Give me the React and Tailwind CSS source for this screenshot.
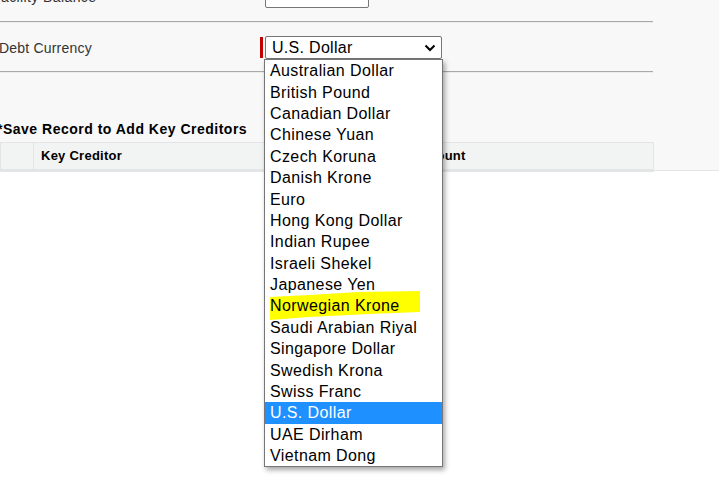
import React from "react";

const currencies = [
  "Australian Dollar",
  "British Pound",
  "Canadian Dollar",
  "Chinese Yuan",
  "Czech Koruna",
  "Danish Krone",
  "Euro",
  "Hong Kong Dollar",
  "Indian Rupee",
  "Israeli Shekel",
  "Japanese Yen",
  "Norwegian Krone",
  "Saudi Arabian Riyal",
  "Singapore Dollar",
  "Swedish Krona",
  "Swiss Franc",
  "U.S. Dollar",
  "UAE Dirham",
  "Vietnam Dong",
];

export default function App() {
  return (
    <div
      className="relative min-h-screen w-[719px] h-[486px] overflow-hidden bg-white"
      style={{ fontFamily: '"Liberation Sans", Arial, sans-serif' }}
    >
      <div className="h-[185px] bg-[#f8f8f8] border-b border-[#e5e5e5]">
        <div className="w-[653px]">
          {/* Facility Balance row (cut off) */}
          <div className="-mt-[14px] flex h-[22px] items-center">
            <div className="w-[265px] -ml-[8px] text-[14px] tracking-[0.4px] text-[#333]">
              Facility Balance
            </div>
            <div className="ml-[8px] h-[22px] w-[104px] rounded-[2px] border border-[#767676] bg-white" />
          </div>
          <div className="mt-[13px] h-[1px] bg-[#a9a9a9]" />
          <div className="h-[1px] bg-[#ececec]" />

          {/* Debt Currency row */}
          <div className="mt-[13px] flex h-[23px] items-center">
            <div className="w-[260px] -ml-[1px] pt-[2px] text-[14px] tracking-[0.2px] text-[#333]">
              Debt Currency
            </div>
            <div className="ml-[1px] h-[21px] w-[3px] bg-[#c00000]" />
            <div className="ml-[2px] flex h-[23px] w-[177px] items-center justify-between rounded-[2px] border border-[#767676] bg-white pl-[6px] pr-[5px] text-[16px] tracking-[0.3px] text-black">
              <span>U.S. Dollar</span>
              <svg width="12" height="8" viewBox="0 0 12 8">
                <polyline
                  points="1.5,1.5 6,6 10.5,1.5"
                  fill="none"
                  stroke="#000"
                  strokeWidth="2"
                />
              </svg>
            </div>
          </div>
          <div className="mt-[12px] h-[1px] bg-[#a9a9a9]" />
          <div className="h-[1px] bg-[#ececec]" />

          <div className="mt-[48px] -ml-[3px] text-[14px] font-bold leading-[16px] tracking-[0.5px] text-black">
            *Save Record to Add Key Creditors
          </div>

          <div className="mt-[5px] flex h-[30px] w-[654px] border border-[#e2e4e6] border-b-[3px] bg-[#f2f3f3] text-[13px] font-bold tracking-[0.25px] text-black">
            <div className="w-[33px] border-r border-[#e2e4e6]" />
            <div className="flex w-[374px] items-center pl-[7px]">Key Creditor</div>
            <div className="flex items-center pl-[7px]">Amount</div>
          </div>
        </div>
      </div>

      {/* Open dropdown list */}
      <div
        className="absolute left-[264px] top-[59px] w-[179px] border border-[#767676] bg-white text-[16px] tracking-[0.4px] text-black"
        style={{ boxShadow: "2px 3px 5px rgba(0,0,0,0.35)" }}
      >
        {currencies.map((c) => {
          const selected = c === "U.S. Dollar";
          const marked = c === "Norwegian Krone";
          return (
            <div
              key={c}
              className={
                "relative flex h-[21.4px] items-center pl-[5px] pt-[1px] leading-[18px] " +
                (selected ? "bg-[#1e90ff] text-white" : "")
              }
            >
              {marked && (
                <svg
                  className="absolute left-[4px] top-[-4px]"
                  width="152"
                  height="30"
                  viewBox="0 0 152 30"
                >
                  <polygon
                    points="1,6 40,4 90,1 151,0 151,21 100,23 40,26 1,29"
                    fill="#ffff00"
                  />
                </svg>
              )}
              <span className="relative">{c}</span>
            </div>
          );
        })}
      </div>
    </div>
  );
}
